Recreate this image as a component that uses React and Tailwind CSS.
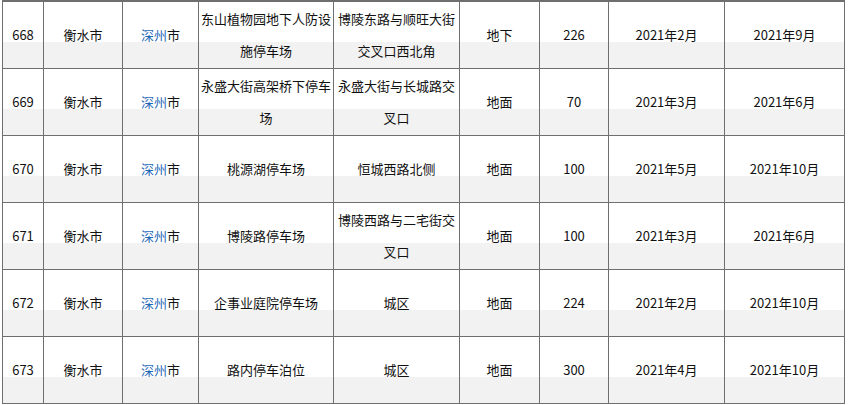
import React from "react";

const rows = [
  ["668", "东山植物园地下人防设施停车场", "博陵东路与顺旺大街交叉口西北角", "地下", "226", "2021年2月", "2021年9月"],
  ["669", "永盛大街高架桥下停车场", "永盛大街与长城路交叉口", "地面", "70", "2021年3月", "2021年6月"],
  ["670", "桃源湖停车场", "恒城西路北侧", "地面", "100", "2021年5月", "2021年10月"],
  ["671", "博陵路停车场", "博陵西路与二宅街交叉口", "地面", "100", "2021年3月", "2021年6月"],
  ["672", "企事业庭院停车场", "城区", "地面", "224", "2021年2月", "2021年10月"],
  ["673", "路内停车泊位", "城区", "地面", "300", "2021年4月", "2021年10月"],
];

const Cell = ({ w, children }) => (
  <div
    className={`${w} shrink-0 h-full border-r border-[#6f6f6f] flex items-center justify-center text-center px-[2px] leading-[32px]`}
  >
    <div>{children}</div>
  </div>
);

const App = () => {
  return (
    <div
      className="w-[848px] h-[405px] bg-white overflow-hidden text-[13px] text-[#111]"
      style={{ fontFamily: '"Noto Sans CJK SC", "Noto Sans", sans-serif' }}
    >
      <div className="ml-[2px] w-[843px] border-l border-t-2 border-[#6f6f6f]">
        {rows.map((r) => (
          <div
            key={r[0]}
            className="flex h-[67px] border-b border-[#6f6f6f] bg-[linear-gradient(to_bottom,#ffffff_40px,#f2f2f2_40px)]"
          >
            <Cell w="w-[41px]">{r[0]}</Cell>
            <Cell w="w-[79px]">衡水市</Cell>
            <Cell w="w-[76px]">
              <span className="text-[#1f68b8]">深州</span>市
            </Cell>
            <Cell w="w-[135px]">{r[1]}</Cell>
            <Cell w="w-[126px]">{r[2]}</Cell>
            <Cell w="w-[80px]">{r[3]}</Cell>
            <Cell w="w-[69px]">{r[4]}</Cell>
            <Cell w="w-[116px]">{r[5]}</Cell>
            <Cell w="w-[120px]">{r[6]}</Cell>
          </div>
        ))}
      </div>
    </div>
  );
};

export default App;
